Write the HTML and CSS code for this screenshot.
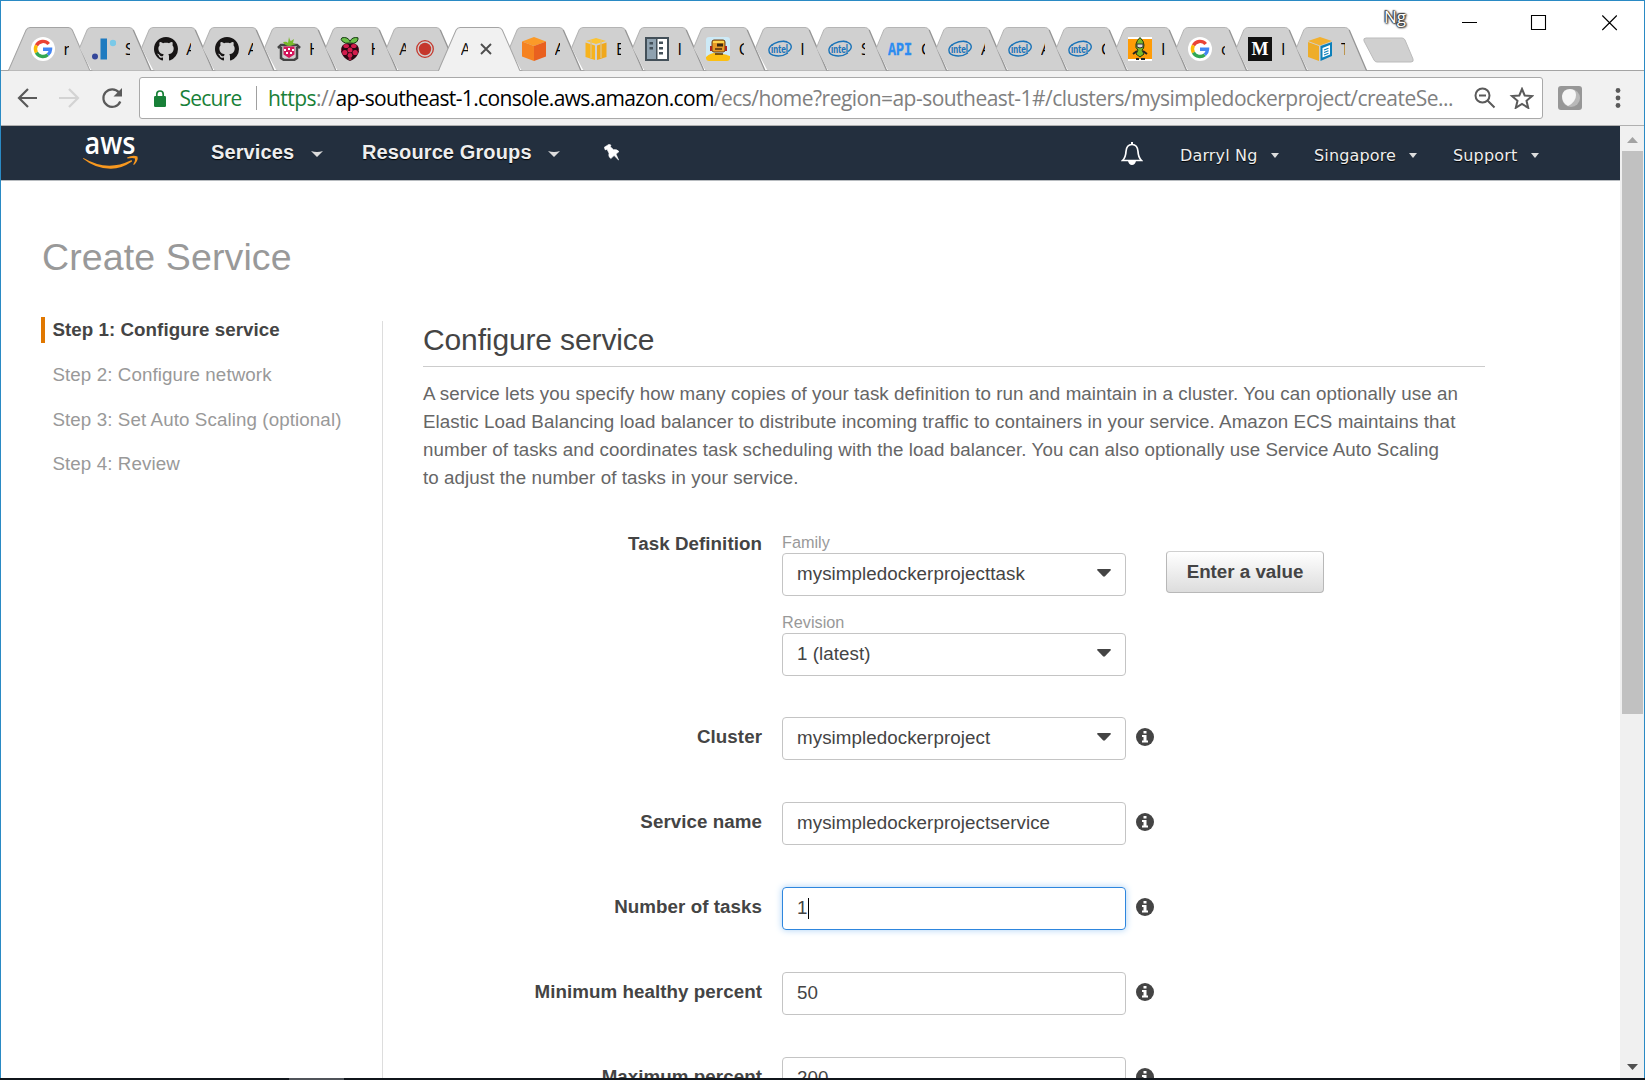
FILE: index.html
```html
<!DOCTYPE html>
<html lang="en">
<head>
<meta charset="utf-8">
<title>Create Service</title>
<link rel="stylesheet" href="styles.css">
</head>
<body>
<svg class="defs" width="0" height="0">
  <symbol id="tab" viewBox="0 0 82 44" preserveAspectRatio="none"><path d="M10.5 21 18 3Q19.500 0.500 22 0.500H60Q62.500 0.500 64 3L80 40Q81 43 82 43.500H24Q22 43.500 21 41Z" fill="#d0d0d0"/><path d="M10.500 21 18 3Q19.500 0.500 22 0.500H60Q62.500 0.500 64 3" fill="none" stroke="#b4b4b4"/><path d="M64 3 80 40Q81 43 82 43.500" fill="none" stroke="#959595" stroke-width="1.300"/></symbol>
  <symbol id="tab-first" viewBox="0 0 82 44" preserveAspectRatio="none"><path d="M0 43.500Q1 43 2 40L18 3Q19.500 0.500 22 0.500H60Q62.500 0.500 64 3L80 40Q81 43 82 43.500" fill="#d0d0d0" stroke="#a4a4a4"/></symbol>
  <symbol id="tab-active" viewBox="0 0 82 44" preserveAspectRatio="none"><path d="M0 44Q1 43 2 40L18 3Q19.500 0.500 22 0.500H60Q62.500 0.500 64 3L80 40Q81 43 82 44" fill="#f1f1f1" stroke="#a4a4a4"/></symbol>
  <symbol id="google" viewBox="0 0 24 24"><circle cx="12" cy="12" r="12" fill="#fff"/><g fill="none" stroke-width="3.400"><path d="M17.700 7A7.500 7.500 0 0 0 5.400 8.400" stroke="#ea4335"/><path d="M5.400 8.400A7.500 7.500 0 0 0 5.400 15.600" stroke="#fbbc05"/><path d="M5.400 15.600A7.500 7.500 0 0 0 16.800 17.700" stroke="#34a853"/><path d="M12 12.300H19.500A7.500 7.500 0 0 1 16.800 17.700" stroke="#4285f4"/></g></symbol>
  <symbol id="github" viewBox="0 0 16 16"><path fill="#171515" d="M8 0C3.580 0 0 3.580 0 8c0 3.540 2.290 6.530 5.470 7.590.4.070.55-.17.55-.38 0-.19-.01-.82-.01-1.490-2.010.37-2.530-.49-2.690-.94-.09-.23-.48-.94-.82-1.130-.28-.15-.68-.52-.01-.53.63-.01 1.080.58 1.230.82.72 1.210 1.870.87 2.330.66.07-.52.28-.87.51-1.070-1.780-.2-3.640-.89-3.640-3.950 0-.87.31-1.590.82-2.150-.08-.2-.36-1.020.08-2.120 0 0 .67-.21 2.200.82.64-.18 1.320-.27 2-.27s1.360.09 2 .27c1.530-1.040 2.200-.82 2.200-.82.44 1.100.16 1.920.08 2.120.51.56.82 1.270.82 2.150 0 3.070-1.870 3.750-3.650 3.950.29.25.54.73.54 1.480 0 1.070-.01 1.930-.01 2.200 0 .21.15.46.55.38A8.010 8.010 0 0 0 16 8c0-4.420-3.580-8-8-8z"/></symbol>
  <symbol id="intel" viewBox="0 0 24 24"><path d="M19 4.600C10 3 1 8 .9 13c0 7 12.600 7.500 19 3" fill="none" stroke="#1a73b8" stroke-width="1.400"/><path d="M15 4.400c7 .3 9.500 4 7.600 7.600-.7 1.300-1.600 2-2.900 2.600" fill="none" stroke="#1a73b8" stroke-width="1.400"/><text x="3" y="15.700" textLength="17" lengthAdjust="spacingAndGlyphs" font-family="Lato" font-weight="900" font-size="11" fill="#1a73b8">intel</text></symbol>
  <symbol id="info" viewBox="0 0 18 18"><circle cx="9" cy="9" r="9" fill="#444"/><path d="M7.500 3h3v2.600h-3zM6 7h4.500v5.500H12v2H6v-2h1.500V9H6z" fill="#fff"/></symbol>
  <symbol id="caret" viewBox="0 0 14 8"><path d="M1 0h12q1.500.4.500 1.500L8 7.300q-1 .9-2 0L.5 1.500Q-.5.400 1 0z" fill="#444"/></symbol>
</svg>
<div class="window">
  <div class="tabstrip">
    <div class="tabs">
      <div class="tab"><svg class="shape"><use href="#tab-first"/></svg><svg class="fav"><use href="#google"/></svg><span class="title">n</span></div>
      <div class="tab"><svg class="shape"><use href="#tab"/></svg><svg class="fav" viewBox="0 0 24 24"><path d="M8.500 1.500h6.500v21H8.500z" fill="#1f7bc0"/><circle cx="3" cy="19.500" r="3" fill="#35479a"/><circle cx="21" cy="6" r="3.200" fill="#7ac9e8"/></svg><span class="title">S</span></div>
      <div class="tab"><svg class="shape"><use href="#tab"/></svg><svg class="fav"><use href="#github"/></svg><span class="title">A</span></div>
      <div class="tab"><svg class="shape"><use href="#tab"/></svg><svg class="fav"><use href="#github"/></svg><span class="title">A</span></div>
      <div class="tab"><svg class="shape"><use href="#tab"/></svg><svg class="fav" viewBox="0 0 24 24"><path d="M1 11 4 8h16l3 3M4 10v11l3 2h10l3-2V10" fill="none" stroke="#444" stroke-width="2.500"/><path d="M6.500 9.500h11v8L12 21l-5.500-3.500z" fill="#d3165b"/><path d="M7 12h2v2H7zM11 11h2v2h-2zM15 12h2v2h-2zM9 15h2v2H9zM13 15h2v2h-2z" fill="#fff"/><path d="M6 5q4-1 5 1L12 0q1 4 2 4l3-2-1 4 3 1-6 2q-5 0-7-4z" fill="#77b82a"/></svg><span class="title">H</span></div>
      <div class="tab"><svg class="shape"><use href="#tab"/></svg><svg class="fav" viewBox="0 0 24 24"><path d="M12 6Q7 7 4.500 4.500T4 .8Q10-.5 12 4.500 14-.5 20 .8 20.500 3 18.500 5T12 6z" fill="#6cc04a" stroke="#173d12"/><path d="M12 6.500q5-1 7.500 2 2.500 4 1 7.500Q18 22 12 24 6 22 3.500 16q-1.500-3.500 1-7.500 2.500-3 7.500-2z" fill="#2a0712"/><g fill="#d31b4c"><ellipse cx="8.200" cy="9" rx="2.800" ry="2"/><ellipse cx="15.800" cy="9" rx="2.800" ry="2"/><circle cx="12" cy="13" r="2.500"/><circle cx="6.800" cy="15.500" r="2.600"/><circle cx="17.200" cy="15.500" r="2.600"/><circle cx="12" cy="18.500" r="2.400"/><path d="M4 10.500v3l-1 1zM20 10.500v3l1 1zM8 19.500l2 1.500M10 22l2-1 2 1-2 1.300z"/></g></svg><span class="title">H</span></div>
      <div class="tab no-icon"><svg class="shape"><use href="#tab"/></svg><span class="title">A</span><svg class="rec" viewBox="0 0 18 18"><circle cx="9" cy="9" r="8.300" fill="none" stroke="#c5372c" stroke-width="1.300"/><circle cx="9" cy="9" r="6.200" fill="#c5372c"/></svg></div>
      <div class="tab no-icon active"><svg class="shape"><use href="#tab-active"/></svg><span class="title">A</span><svg class="close" viewBox="0 0 12 12"><path d="M1 1l10 10M11 1 1 11" stroke="#4e4e4e" stroke-width="1.900"/></svg></div>
      <div class="tab"><svg class="shape"><use href="#tab"/></svg><svg class="fav" viewBox="0 0 24 24"><path d="M12 0l12 4.500L12 9 0 4.500z" fill="#fb9a28"/><path d="M0 4.500 12 9v15L0 19.500z" fill="#f58220"/><path d="M24 4.500 12 9v15l12-4.500z" fill="#e9601f"/></svg><span class="title">A</span></div>
      <div class="tab"><svg class="shape"><use href="#tab"/></svg><svg class="fav" viewBox="0 0 24 24"><path d="M12 1l10 3-10 3L2 4z" fill="#fbc434"/><path d="M1.500 5.500 11 8.500V23l-9.500-3z" fill="#f7b31c"/><path d="M22.500 5.500 13 8.500V23l9.500-3z" fill="#f0a81d"/><path d="M7 3v18M17 3v18" stroke="#e3c177" stroke-width="1.500"/></svg><span class="title">E</span></div>
      <div class="tab"><svg class="shape"><use href="#tab"/></svg><svg class="fav" viewBox="0 0 24 24"><path d="M0 0h24v24H0z" fill="#435059"/><path d="M2 2h9v20H2z" fill="#8fa2b0"/><path d="M12.500 2H22v20h-9.500z" fill="#fff"/><path d="M4.500 5h3.500v2.500H4.500zM4.500 10h3.500v2.500H4.500zM14 4.500h4V7h-4zM14 10h4v2.500h-4zM14 15h4v2.500h-4z" fill="#435059"/></svg><span class="title">I</span></div>
      <div class="tab"><svg class="shape"><use href="#tab"/></svg><svg class="fav" viewBox="0 0 24 24"><rect width="24" height="24" rx="3" fill="#cdeaf7"/><path d="M0 20q6-5 12-4t12 3v2q0 3-3 3H3q-3 0-3-3z" fill="#fcbf12"/><rect x="6" y="3" width="13" height="12" rx="2" fill="#e79a28" stroke="#6b4112"/><path d="M7 4h11v2H7z" fill="#ffd44d"/><path d="M11 6.500h6v3h-6z" fill="#3a2a14"/><path d="M9 12h7M9 17h8" stroke="#50300e" stroke-width="1.500"/><path d="M4 9h2v5H4zM19 9h2v5h-2z" fill="#a22"/></svg><span class="title">C</span></div>
      <div class="tab"><svg class="shape"><use href="#tab"/></svg><svg class="fav"><use href="#intel"/></svg><span class="title">I</span></div>
      <div class="tab narrow"><svg class="shape"><use href="#tab"/></svg><svg class="fav"><use href="#intel"/></svg><span class="title">S</span></div>
      <div class="tab narrow"><svg class="shape"><use href="#tab"/></svg><svg class="fav" viewBox="0 0 24 24"><text x="0" y="18" textLength="24" lengthAdjust="spacingAndGlyphs" font-family="Liberation Mono" font-weight="bold" font-size="19" fill="#2c8cf0" stroke="#2c8cf0" stroke-width=".4">API</text></svg><span class="title">C</span></div>
      <div class="tab narrow"><svg class="shape"><use href="#tab"/></svg><svg class="fav"><use href="#intel"/></svg><span class="title">A</span></div>
      <div class="tab narrow"><svg class="shape"><use href="#tab"/></svg><svg class="fav"><use href="#intel"/></svg><span class="title">A</span></div>
      <div class="tab narrow"><svg class="shape"><use href="#tab"/></svg><svg class="fav"><use href="#intel"/></svg><span class="title">C</span></div>
      <div class="tab narrow"><svg class="shape"><use href="#tab"/></svg><svg class="fav" viewBox="0 0 24 24"><path d="M0 0h24v24H0z" fill="#fff"/><path d="M0 2h24v20H0z" fill="#ff9c07"/><path d="M12 .5Q16 4 16 8t-2 5l2 4-4 3-4-3 2-4Q7 11 8 7t4-6.500z" fill="#7cb828" stroke="#23370d"/><path d="M9 7h6v3q-3 2-6 0z" fill="#ddd" stroke="#333"/><path d="M5 17l4-3M19 17l-4-3M8 22h3M13 22h4" stroke="#222" stroke-width="2"/></svg><span class="title">I</span></div>
      <div class="tab narrow"><svg class="shape"><use href="#tab"/></svg><svg class="fav"><use href="#google"/></svg><span class="title">c</span></div>
      <div class="tab narrow"><svg class="shape"><use href="#tab"/></svg><svg class="fav" viewBox="0 0 24 24"><path d="M0 0h24v24H0z" fill="#111"/><text x="3.500" y="18" textLength="17" lengthAdjust="spacingAndGlyphs" font-family="Liberation Serif" font-weight="bold" font-size="18" fill="#fff">M</text></svg><span class="title">I</span></div>
      <div class="tab narrow"><svg class="shape"><use href="#tab"/></svg><svg class="fav" viewBox="0 0 24 24"><path d="M12 0l12 4-12 4.500L0 4z" fill="#f2b02f"/><path d="M0 5l11 4v15L0 20z" fill="#eead29"/><path d="M12.500 9 24 5v14l-11.500 5z" fill="#0d80ba"/><path d="M14.500 11 22 8v9.500l-7.500 3z" fill="#fff"/><path d="M16 13l4.500-1.700M16 15.500l4.500-1.700M16 18l4.500-1.700" stroke="#0d80ba" stroke-width="1.200"/></svg><span class="title">T</span></div>
      <svg class="newtab" viewBox="0 0 52 26"><path d="M4 1h36q2 0 3 2l8 19q1 3-2 3H15q-2 0-3-2L2 4Q1 1 4 1z" fill="#d0d0d0" stroke="#bbb"/></svg>
    </div>
    <div class="profile">Ng</div>
    <svg class="controls" width="156" height="16" viewBox="0 0 156 16"><path d="M0 7.500h15M69.500.500h14v14h-14zM140.300.500l14.500 14.500M154.800.500 140.300 15" fill="none" stroke="#000" stroke-width="1.100"/></svg>
  </div>

  <div class="toolbar">
    <svg class="nav-icons" width="106" height="22" viewBox="0 0 106 22" fill="none" stroke-width="2.200"><path d="M20 11H2M11 2l-9 9 9 9" stroke="#5a5a5a"/><path d="M42 11h19M52 2l9 9-9 9" stroke="#d3d3d3"/><path d="M102 5.500A8.800 8.800 0 1 0 103.300 14.500" stroke="#5a5a5a"/><path d="M105 1v8.500h-8.500z" fill="#5a5a5a"/></svg>
    <div class="omnibox">
      <svg class="lock" width="12" height="17" viewBox="0 0 12 17"><rect y="6" width="12" height="11" rx="1.200" fill="#188038"/><path d="M2.800 7V4.200a3.200 3.200 0 0 1 6.400 0V7" fill="none" stroke="#188038" stroke-width="1.700"/></svg>
      <span class="secure">Secure</span>
      <span class="sep"></span>
      <span class="url"><i class="scheme">https</i>://<b>ap-southeast-1.console.aws.amazon.com</b>/ecs/home?region=ap-southeast-1#/clusters/mysimpledockerproject/createSe...</span>
      <svg class="omni-icons" width="60" height="22" viewBox="0 0 60 22" fill="none" stroke="#5a5a5a" stroke-width="2"><circle cx="8.500" cy="8.500" r="7"/><path d="M5 8.500h7M13.500 13.500l7 7"/><path d="M48 2l2.700 6.500 7.300.600-5.500 4.700 1.700 7-6.200-3.800-6.200 3.800 1.700-7L38 9.100l7.300-.6z" stroke-width="2"/></svg>
    </div>
    <svg class="ext" width="24" height="24" viewBox="0 0 24 24"><rect width="24" height="24" rx="3" fill="#979797"/><circle cx="13" cy="12" r="9" fill="#b9b9b9"/><path d="M4 10q1-7 8-7 6 0 6 6 0 7-8 11-6-3-6-10z" fill="#f5f5f5"/></svg>
    <svg class="dots" width="6" height="20" viewBox="0 0 6 20" fill="#5a5a5a"><circle cx="3" cy="2.500" r="2.400"/><circle cx="3" cy="10" r="2.400"/><circle cx="3" cy="17.500" r="2.400"/></svg>
  </div>

  <div class="viewport">
    <div class="page">
      <header class="aws">
        <svg class="logo" width="56" height="36" viewBox="0 0 56 36"><text x="1.500" y="19.500" textLength="51" lengthAdjust="spacingAndGlyphs" font-family="Open Sans" font-weight="600" font-size="30" fill="#fff">aws</text><path d="M.5 24Q24 38 47.500 26.500q2-1 1.500 1Q38 35 27.500 34.800 12 34.500.2 24.800q-.4-.8.300-.8z" fill="#f7981f"/><path d="M44 23.500q6-3 10.500-1 1 4-3.500 8.500-1 0-.5-1.200Q52.500 26 52 24.500q-2-.8-7.500 0z" fill="#f7981f"/></svg>
        <div class="menu services">Services<svg width="12" height="6" viewBox="0 0 12 6"><path d="M0 0q6 2 12 0L6 6z" fill="#ddd"/></svg></div>
        <div class="menu groups">Resource Groups<svg width="12" height="6" viewBox="0 0 12 6"><path d="M0 0q6 2 12 0L6 6z" fill="#ddd"/></svg></div>
        <svg class="pin" width="16" height="17" viewBox="0 0 16 17"><path d="M.3 3.200 5.200.2l1.800 1-.7 1.500 3.300 3q3.500-.6 5.400 1.900l-3 2.500 2.600 5.900-4.500-4.400-3.300 3Q4 12.300 5 9.200L3 5.300l-1.800.6z" fill="#fff" stroke="#fff" stroke-width=".6"/></svg>
        <svg class="bell" width="22" height="23" viewBox="0 0 22 23"><path d="M11 2.500q-5.500 0-6 7-.3 6-3.500 9h19q-3.200-3-3.500-9-.5-7-6-7z" fill="none" stroke="#fff" stroke-width="1.700"/><path d="M10 0h2v3h-2zM7 19h8q-1 4-4 4t-4-4z" fill="#fff"/></svg>
        <div class="menu small user">Darryl Ng<svg width="8" height="5" viewBox="0 0 8 5"><path d="M0 0h8L4 5z" fill="#ddd"/></svg></div>
        <div class="menu small region">Singapore<svg width="8" height="5" viewBox="0 0 8 5"><path d="M0 0h8L4 5z" fill="#ddd"/></svg></div>
        <div class="menu small support">Support<svg width="8" height="5" viewBox="0 0 8 5"><path d="M0 0h8L4 5z" fill="#ddd"/></svg></div>
      </header>
      <h1>Create Service</h1>
      <div class="columns">
        <nav class="steps">
          <div class="step current">Step 1: Configure service</div>
          <div class="step">Step 2: Configure network</div>
          <div class="step">Step 3: Set Auto Scaling (optional)</div>
          <div class="step">Step 4: Review</div>
        </nav>
        <main>
          <h2>Configure service</h2>
          <p>A service lets you specify how many copies of your task definition to run and maintain in a cluster. You can optionally use an<br>Elastic Load Balancing load balancer to distribute incoming traffic to containers in your service. Amazon ECS maintains that<br>number of tasks and coordinates task scheduling with the load balancer. You can also optionally use Service Auto Scaling<br>to adjust the number of tasks in your service.</p>
          <div class="form">
            <div class="row task">
              <label>Task Definition</label>
              <div class="stack">
                <span class="hint">Family</span>
                <div class="field">mysimpledockerprojecttask<svg class="arrow"><use href="#caret"/></svg></div>
                <span class="hint second">Revision</span>
                <div class="field">1 (latest)<svg class="arrow"><use href="#caret"/></svg></div>
              </div>
              <div class="button">Enter a value</div>
            </div>
            <div class="row"><label>Cluster</label><div class="field">mysimpledockerproject<svg class="arrow"><use href="#caret"/></svg></div><svg class="info"><use href="#info"/></svg></div>
            <div class="row"><label>Service name</label><div class="field">mysimpledockerprojectservice</div><svg class="info"><use href="#info"/></svg></div>
            <div class="row"><label>Number of tasks</label><div class="field focused">1<span class="cursor"></span></div><svg class="info"><use href="#info"/></svg></div>
            <div class="row"><label>Minimum healthy percent</label><div class="field">50</div><svg class="info"><use href="#info"/></svg></div>
            <div class="row"><label>Maximum percent</label><div class="field">200</div><svg class="info"><use href="#info"/></svg></div>
          </div>
        </main>
      </div>
    </div>
    <div class="scrollbar">
      <svg width="11" height="6" viewBox="0 0 11 6"><path d="M0 6h11L5.500 0z" fill="#a3a3a3"/></svg>
      <div class="thumb"></div>
      <svg class="down" width="11" height="6" viewBox="0 0 11 6"><path d="M0 0h11L5.500 6z" fill="#505050"/></svg>
    </div>
  </div>
</div>
<div class="taskbar"><span></span></div>
</body>
</html>
```
FILE: styles.css
```css
* { box-sizing: border-box; }
html, body { margin: 0; }
body { width: 1645px; height: 1080px; overflow: hidden; background: #fff; font-family: "Liberation Sans", Arial, sans-serif; display: flex; flex-direction: column; }
svg { display: block; flex: none; }
.defs { position: absolute; }
.window { height: 1078px; border: 1px solid #2a8ac4; border-bottom: 0; display: flex; flex-direction: column; }

/* tab strip */
.tabstrip { height: 70px; flex: none; display: flex; border-bottom: 1px solid #a4a4a4; }
.tabs { display: flex; width: 1413px; padding: 26px 0 0 7px; flex: none; }
.tab { position: relative; width: 61.4px; height: 44px; flex: none; display: flex; align-items: center; padding-left: 23px; }
.tab.narrow { width: 60px; padding-left: 22px; }
.shape { position: absolute; left: 0; top: 0; width: 82.400px; height: 44px; }
.narrow .shape { width: 81px; }
.fav { position: relative; width: 24px; height: 24px; }
.title { position: relative; font: 16px "Open Sans", sans-serif; color: #000; width: 5px; overflow: hidden; margin-left: 8.500px; height: 22px; line-height: 22px; }
.narrow .title { width: 3.500px; margin-left: 9px; }
.no-icon .title { width: 7px; margin-left: 0; color: #111; }
.rec { position: relative; width: 18px; height: 18px; margin-left: 9.500px; }
.active { z-index: 1; }
.close { position: relative; width: 12px; height: 12px; margin-left: 12.500px; }
.newtab { width: 52px; height: 26px; margin: 10px 0 0 15.500px; }
.profile { width: 60px; margin: 3px 0 0 -30px; font: 17px/26px "Open Sans", sans-serif; color: #fff; text-shadow: 0 0 1px #222, 0 0 2px #222, 0 0 2px #222, 1px 1px 2px #333, -1px -1px 1px #555; }
.controls { margin: 14px 0 0 18px; }

/* toolbar */
.toolbar { height: 55px; flex: none; background: #f1f1f1; border-bottom: 1px solid #b0b0b0; display: flex; align-items: center; padding-left: 16px; }
.omnibox { width: 1404px; height: 42px; margin-left: 16px; border: 1px solid #a9a9a9; border-radius: 3px; background: #fff; display: flex; align-items: center; padding-left: 14px; font: 21px/30px "Open Sans", sans-serif; white-space: nowrap; }
.secure { width: 76px; margin-left: 13.500px; color: #188038; letter-spacing: -.75px; }
.sep { width: 1px; height: 24px; background: #a0a0a0; }
.url { width: 1206px; margin-left: 11.500px; color: #808080; letter-spacing: -.53px; }
.url b { color: #000; font-weight: 400; letter-spacing: -.65px; }
.url .scheme { color: #188038; font-style: normal; }
.ext { margin-left: 15px; }
.dots { margin-left: 33px; }

/* viewport */
.viewport { flex: 1; min-height: 0; display: flex; }
.page { width: 1619px; overflow: hidden; }
.aws { height: 55px; background: #232f3e; border-bottom: 1px solid #b8bcc0; display: flex; align-items: flex-start; }
.logo { margin: 8px 0 0 82px; }
.menu { display: flex; align-items: center; font-weight: 700; font-size: 20px; line-height: 24px; letter-spacing: .12px; color: #eee; margin-top: 14px; white-space: nowrap; text-shadow: 0 1px 1px #000; }
.menu svg { margin: 4px 0 0 auto; }
.services { width: 112px; margin-left: 72px; }
.groups { width: 198px; margin-left: 39px; }
.pin { margin: 18px 0 0 44px; }
.bell { margin: 16px 0 0 501px; }
.small { font: 16px/24px "DejaVu Sans", sans-serif; letter-spacing: .15px; margin-top: 18px; }
.small svg { margin-top: -2px; }
.user { width: 99px; margin-left: 37px; }
.region { width: 103px; margin-left: 35px; }
.support { width: 86px; margin-left: 36px; }
h1 { margin: 54px 0 0 41px; font-size: 37.5px; line-height: 44px; font-weight: 400; letter-spacing: .12px; color: #999; }
.columns { display: flex; margin-top: 38px; }
.steps { width: 341px; margin-left: 40px; display: flex; flex-direction: column; gap: 18.800px; }
.step { font-size: 18.750px; line-height: 26px; letter-spacing: .1px; color: #999; border-left: 4px solid transparent; padding-left: 7.400px; white-space: nowrap; }
.step.current { font-weight: 700; letter-spacing: .05px; color: #444; border-color: #e07700; }
main { width: 1103px; height: 760px; margin-top: 4px; border-left: 1px solid #ddd; padding: 1px 0 0 40px; }
h2 { margin: 0; height: 45px; border-bottom: 1px solid #ccc; font-size: 30px; line-height: 36px; font-weight: 400; letter-spacing: -.13px; color: #444; }
p { margin: 13px 0 0; font-size: 18.750px; line-height: 28px; letter-spacing: .075px; color: #666; white-space: nowrap; }
.form { margin-top: 41px; display: flex; flex-direction: column; gap: 42px; }
.row { display: flex; height: 43px; }
.row.task { height: 142px; }
label { width: 339px; margin-right: 20px; padding-top: 9px; text-align: right; font-size: 18.750px; line-height: 22px; font-weight: 700; letter-spacing: .06px; color: #444; }
.task label { padding-top: 0; }
.hint { display: block; font-size: 16.250px; line-height: 18px; padding-bottom: 2px; color: #999; }
.hint.second { margin-top: 17px; }
.field { width: 344px; height: 43px; border: 1px solid #c4c4c4; border-radius: 4px; padding: 0 14px 1px 14px; display: flex; align-items: center; font-size: 18.750px; line-height: 22px; letter-spacing: .07px; color: #444; }
.focused { border-color: #2e86de; box-shadow: 0 0 7px #a9d0f5; }
.cursor { width: 1px; height: 21px; background: #000; }
.arrow { width: 14px; height: 8px; margin: 0 0 2px auto; }
.button { width: 158px; height: 42px; margin: 18px 0 0 40px; border: 1px solid #b8b8b8; border-top-color: #d0d0d0; border-radius: 4px; background: linear-gradient(#fff, #ddd); font-size: 18.750px; line-height: 39px; font-weight: 700; color: #444; text-align: center; }
.info { width: 18px; height: 18px; margin: 11px 0 0 10px; }

/* scrollbar */
.scrollbar { width: 24px; background: #f0f0f0; display: flex; flex-direction: column; align-items: center; padding: 11px 0 8px; }
.thumb { width: 21px; height: 563px; margin-top: 8px; background: #c1c1c1; }
.down { margin-top: auto; }
.taskbar { height: 2px; background: #10151b; padding-left: 289px; }
.taskbar span { display: block; width: 55px; height: 2px; background: #50545a; }
```
